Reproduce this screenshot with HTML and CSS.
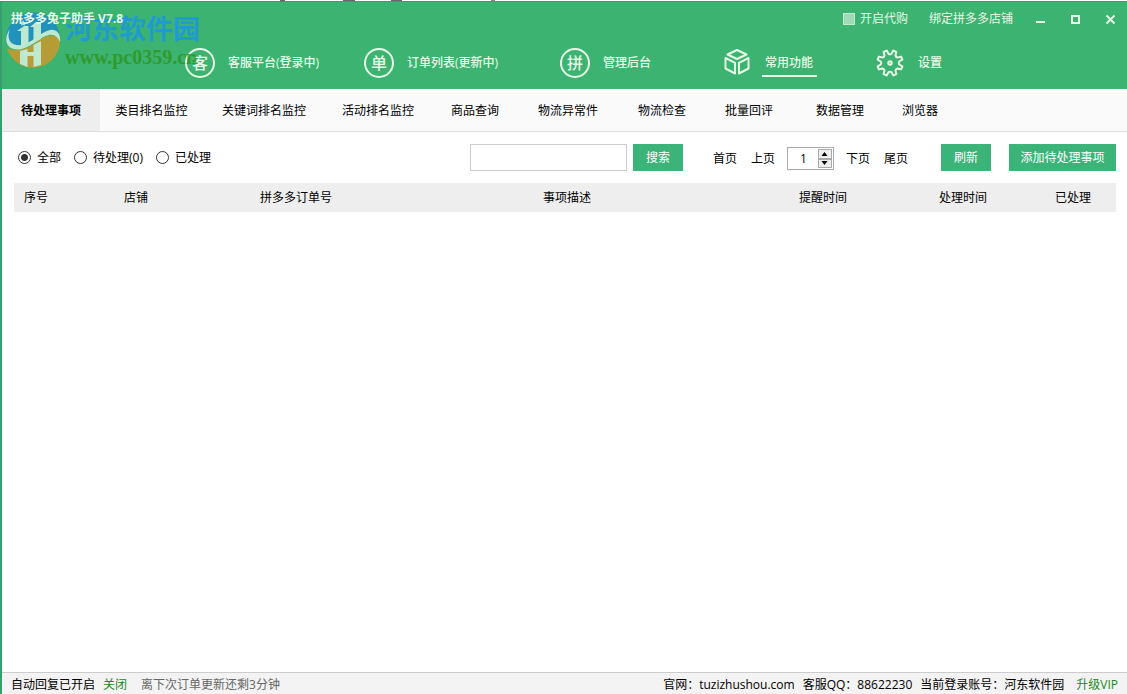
FILE: index.html
```html
<!DOCTYPE html>
<html lang="zh-CN">
<head>
<meta charset="utf-8">
<title>拼多多兔子助手 V7.8</title>
<link rel="stylesheet" href="styles.css">
</head>
<body>
<div class="edge"></div>
<div class="window">
  <header class="header">
    <div class="titlebar">
      <h1 class="title">拼多多兔子助手 V7.8</h1>
      <label class="proxy"><input type="checkbox" class="proxy-box">开启代购</label>
      <a class="bind" href="#">绑定拼多多店铺</a>
      <div class="win-buttons">
        <button class="win-btn" aria-label="最小化"><svg width="11" height="11" viewBox="0 0 11 11"><path d="M1 8h9" stroke="currentColor" stroke-width="2"/></svg></button>
        <button class="win-btn" aria-label="最大化"><svg width="11" height="11" viewBox="0 0 11 11"><rect x="2" y="2" width="7" height="7" fill="none" stroke="currentColor" stroke-width="2"/></svg></button>
        <button class="win-btn" aria-label="关闭"><svg width="11" height="11" viewBox="0 0 11 11"><path d="M1.5 1.5l8 8M9.5 1.5l-8 8" stroke="currentColor" stroke-width="2"/></svg></button>
      </div>
    </div>
    <nav class="nav">
      <a class="nav-item" href="#"><span class="ring">客</span><span class="nav-label">客服平台(登录中)</span></a>
      <a class="nav-item" href="#"><span class="ring">单</span><span class="nav-label">订单列表(更新中)</span></a>
      <a class="nav-item" href="#"><span class="ring">拼</span><span class="nav-label">管理后台</span></a>
      <a class="nav-item" href="#">
        <svg width="30" height="30" viewBox="0 0 30 30" fill="none" stroke="currentColor" stroke-width="2" stroke-linejoin="round"><path d="M15 2L24.500 6.500L15 11L5.500 6.500Z"/><path d="M3.500 10L13 14.800V25.500L3.500 20.500Z"/><path d="M26.500 10L17 14.800V25.500L26.500 20.500Z"/></svg>
        <span class="nav-label nav-current">常用功能</span></a>
      <a class="nav-item" href="#">
        <svg width="30" height="30" viewBox="0 0 30 30" fill="none" stroke="currentColor" stroke-width="2" stroke-linejoin="round"><path d="M16.500 5.800L18.300 2.600L21.400 3.900L20.500 7.500Q20.800 9.200 22.500 9.500L26.100 8.600L27.400 11.700L24.200 13.500Q23.200 15 24.200 16.500L27.400 18.300L26.100 21.400L22.500 20.500Q20.800 20.800 20.500 22.500L21.400 26.100L18.300 27.400L16.500 24.200Q15 23.200 13.500 24.200L11.700 27.400L8.600 26.100L9.500 22.500Q9.200 20.800 7.500 20.500L3.900 21.400L2.600 18.300L5.800 16.500Q6.800 15 5.800 13.500L2.600 11.700L3.900 8.600L7.500 9.500Q9.200 9.200 9.500 7.500L8.600 3.900L11.700 2.600L13.500 5.800Q15 6.800 16.500 5.800Z"/><circle cx="15" cy="15" r="1.7"/></svg>
        <span class="nav-label">设置</span></a>
    </nav>
    <div class="mark">
      <svg class="mark-logo" width="58" height="58" viewBox="0 0 58 58">
        <path d="M2 31A27 27 0 0 1 56 26C46 18 38 21 29 29C19 36 8 37 2 31Z" fill="#1f8fc4"/>
        <path d="M3 37C13 42 25 37 34 30C42 24 50 22 56 29A27 27 0 0 1 3 37Z" fill="#c39a2e"/>
        <path d="M6 18C-3 31 5 41 18 38C29 35 36 26 45 24C51 23 54 27 56 31C57 23 53 18 46 19C37 21 31 29 21 33C10 37 1 31 6 18Z" fill="#cdeedb"/>
        <path d="M13 20L20 15H24.500V34L17 36V20ZM26 16L32 11H37V28L29.500 32V16ZM16 40L23.500 38V41H29.500V34L37 30V54L29.500 56V45H23.500V56L16 53Z" fill="#cdeedb"/>
        <path d="M19 9l1 2 2 .3-1.500 1.500.4 2-1.900-1-1.900 1 .4-2L16 11.300l2-.3z" fill="#cdeedb"/>
      </svg>
      <div class="mark-text">
        <span class="mark-name">河东软件园</span>
        <span class="mark-url">www.pc0359.cn</span>
      </div>
    </div>
  </header>

  <nav class="tabs">
    <a class="tab tab-active" href="#">待处理事项</a>
    <a class="tab" href="#">类目排名监控</a>
    <a class="tab" href="#">关键词排名监控</a>
    <a class="tab" href="#">活动排名监控</a>
    <a class="tab" href="#">商品查询</a>
    <a class="tab" href="#">物流异常件</a>
    <a class="tab" href="#">物流检查</a>
    <a class="tab" href="#">批量回评</a>
    <a class="tab" href="#">数据管理</a>
    <a class="tab" href="#">浏览器</a>
  </nav>

  <main class="content">
    <div class="toolbar">
      <div class="filters">
        <label class="filter"><input type="radio" name="state" class="radio" checked>全部</label>
        <label class="filter"><input type="radio" name="state" class="radio">待处理(0)</label>
        <label class="filter"><input type="radio" name="state" class="radio">已处理</label>
      </div>
      <form class="search">
        <input type="text" class="search-box" aria-label="搜索内容">
        <button type="button" class="btn">搜索</button>
      </form>
      <div class="pager">
        <span class="pages"><a href="#">首页</a><a href="#">上页</a></span>
        <span class="spinner">
          <input class="page-no" type="text" value="1" aria-label="页码">
          <span class="steps">
            <button class="step" aria-label="增加"><svg width="7" height="4" viewBox="0 0 7 4"><path d="M3.500 0L6.500 4H0.500Z"/></svg></button>
            <button class="step" aria-label="减少"><svg width="7" height="4" viewBox="0 0 7 4"><path d="M3.500 4L6.500 0H0.500Z"/></svg></button>
          </span>
        </span>
        <span class="pages"><a href="#">下页</a><a href="#">尾页</a></span>
      </div>
      <div class="actions">
        <button class="btn">刷新</button>
        <button class="btn btn-add">添加待处理事项</button>
      </div>
    </div>
    <table class="grid">
      <colgroup><col class="c-no"><col class="c-shop"><col class="c-order"><col><col class="c-remind"><col class="c-time"><col class="c-done"></colgroup>
      <thead><tr><th>序号</th><th>店铺</th><th>拼多多订单号</th><th>事项描述</th><th>提醒时间</th><th>处理时间</th><th>已处理</th></tr></thead>
      <tbody></tbody>
    </table>
  </main>

  <footer class="status">
    <span>自动回复已开启</span>
    <a class="green" href="#">关闭</a>
    <span class="countdown">离下次订单更新还剩3分钟</span>
    <span class="site">官网：tuzizhushou.com</span>
    <span>客服QQ：88622230</span>
    <span>当前登录账号：河东软件园</span>
    <a class="green upgrade" href="#">升级VIP</a>
  </footer>
</div>
</body>
</html>
```
FILE: styles.css
```css
* { box-sizing: border-box; }
body {
  margin: 0;
  min-height: 100vh;
  display: flex;
  flex-direction: column;
  background: #fff;
  color: #000;
  font: 12px/18px "Open Sans", "Noto Sans CJK SC", sans-serif;
}
a { color: inherit; text-decoration: none; }
button, input { font: inherit; color: inherit; margin: 0; }
.edge {
  height: 1px;
  background: linear-gradient(90deg, #fff 280px, #667 280px 285px, #fff 285px 343px, #667 343px 355px, #fff 355px 391px, #667 391px 402px, #fff 402px 491px, #889 491px 495px, #fff 495px);
}
.window {
  flex: 1;
  display: flex;
  flex-direction: column;
  border-left: 2px solid #35a06b;
}
.header {
  position: relative;
  height: 88px;
  background: #3cb371;
  border-top: 1px solid #349f68;
  color: #e6fae6;
}
.titlebar {
  display: flex;
  align-items: center;
  height: 34px;
  padding: 0 11px 0 9px;
}
.title {
  position: relative;
  z-index: 1;
  margin: 0 auto 0 0;
  font-size: 12px;
  line-height: 18px;
}
.proxy { display: flex; align-items: center; gap: 5px; }
.proxy-box {
  appearance: none;
  width: 12px;
  height: 12px;
  background: #a2dab5;
  border: 1px solid #c4ebd0;
}
.bind { margin-left: 21px; }
.win-buttons { display: flex; gap: 24px; margin-left: 22px; }
.win-btn {
  display: flex;
  padding: 0;
  width: 11px;
  border: 0;
  background: none;
  color: #e6fae6;
}
.nav {
  display: grid;
  grid-template-columns: 179px 196px 162px 153px auto;
  align-items: center;
  height: 53px;
  padding-left: 183px;
}
.nav-item { display: flex; align-items: center; gap: 10px; font-weight: 500; }
.nav-label { padding: 5px 4px 3px 3px; border-bottom: 2px solid transparent; }
.nav-current { border-color: #e6fae6; }
.ring {
  display: flex;
  align-items: center;
  justify-content: center;
  width: 30px;
  height: 30px;
  border: 2px solid #e6fae6;
  border-radius: 50%;
  font-size: 16px;
}
.mark {
  position: absolute;
  left: 2px;
  top: 9px;
  display: flex;
  gap: 3px;
  pointer-events: none;
}
.mark-logo { opacity: 0.9; }
.mark-text { display: flex; flex-direction: column; opacity: 0.8; }
.mark-name {
  color: #1996e8;
  font-size: 27px;
  font-weight: 700;
  line-height: 36px;
}
.mark-url {
  color: #2d961d;
  font: bold 20px/20px "Liberation Serif", serif;
}
.tabs {
  display: grid;
  grid-template-columns: 98px 103px 122px 106px 88px 98px 90px 84px 98px 62px;
  height: 43px;
  background: #fafafa;
  border-bottom: 1px solid #ddd;
}
.tab { display: flex; align-items: center; justify-content: center; padding-top: 1px; }
.tab-active { background: #eee; font-weight: 700; }
.content { flex: 1; padding: 0 11px 0 12px; }
.toolbar { display: flex; align-items: center; height: 51px; }
.filters { display: flex; gap: 13px; margin-left: 4px; }
.filter { display: flex; align-items: center; gap: 6px; }
.radio {
  appearance: none;
  width: 13px;
  height: 13px;
  border: 1px solid #333;
  border-radius: 50%;
}
.radio:checked { background: radial-gradient(#333 0 3px, #fff 4px); }
.search { display: flex; gap: 6px; margin-left: auto; }
.search-box { width: 157px; height: 27px; border: 1px solid #ccc; padding: 0 6px; }
.btn {
  height: 27px;
  min-width: 50px;
  padding: 0 10px;
  border: 0;
  background: #3cb378;
  color: #fff;
}
.btn-add { min-width: 107px; }
.pager { display: flex; align-items: center; gap: 12px; margin-left: 30px; padding-top: 2px; }
.pages { display: flex; gap: 14px; }
.spinner {
  display: flex;
  width: 47px;
  height: 23px;
  padding: 1px;
  border: 1px solid #aaa;
}
.page-no { flex: 1; min-width: 0; padding: 0; border: 0; text-align: center; }
.steps { display: flex; flex-direction: column; width: 14px; }
.step {
  flex: 1;
  display: flex;
  align-items: center;
  justify-content: center;
  padding: 0;
  border: 1px solid #aaa;
  background: #eee;
}
.actions { display: flex; gap: 18px; margin-left: 33px; }
.grid { width: 100%; border-collapse: collapse; table-layout: fixed; }
.grid th { height: 29px; padding: 0; background: #eee; font-weight: 400; }
.grid th:last-child { padding-right: 6px; }
.c-no { width: 44px; }
.c-shop { width: 156px; }
.c-order { width: 164px; }
.c-remind { width: 134px; }
.c-time { width: 146px; }
.c-done { width: 80px; }
.status {
  display: flex;
  align-items: center;
  gap: 8px;
  min-height: 22px;
  padding: 3px 9px 0;
  border-top: 1px solid #ccc;
  background: #f3f3f3;
}
.green { color: #1a8a1a; }
.countdown { margin-left: 6px; color: #666; }
.site { margin-left: auto; }
.upgrade { margin-left: 4px; }
```
